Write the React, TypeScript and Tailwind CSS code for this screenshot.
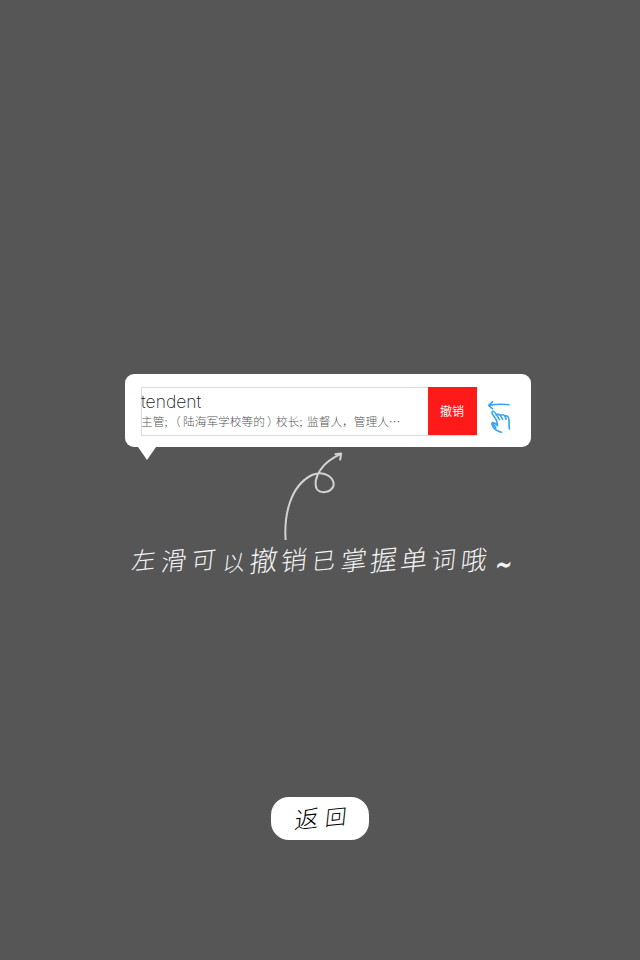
const hand = 'font-["Noto_Sans_CJK_SC",sans-serif] font-light';

// Each glyph sits in a 30px cell; its own size and drop imitate brush writing.
const caption = [
  ['左', 'text-[24px]'],
  ['滑', 'text-[25px]'],
  ['可', 'text-[24px]'],
  ['以', 'text-[22px] pt-[3px]'],
  ['撤', 'text-[28px]'],
  ['销', 'text-[26px]'],
  ['已', 'text-[23px]'],
  ['掌', 'text-[26px]'],
  ['握', 'text-[27px]'],
  ['单', 'text-[27px]'],
  ['词', 'text-[24px]'],
  ['哦', 'text-[26px]'],
];

function SwipeHand() {
  return (
    <svg width="26" height="36" viewBox="486 399 26 36" fill="none" stroke="#35a4f5" strokeWidth="1.6" strokeLinecap="round" strokeLinejoin="round">
      <path d="M509 404.7Q499 403.4 488.8 405.4M492.6 401.8L488.6 405.4L492.6 408.8" />
      <path d="M496.6 420.5L492.2 413.6Q491.6 411.2 493.4 411.3Q494.8 411.5 499.4 419.6M496 414.8Q498.6 413.6 500.3 415.4L502.6 419.2M500.4 415.4Q503.6 413.8 505 416L506 419.3M505 416Q507.8 415.2 508.6 418.2C509.8 421.5 508.4 425 509.4 429M496.6 420.5L497.6 425.8Q494.5 421.8 492.3 422.8Q491 424 493.5 427.5Q496 430.8 501.4 432.3M492.3 422.8L495.8 427.5" />
    </svg>
  );
}

function CurlArrow() {
  return (
    <svg className="ml-[280px]" width="66" height="93" viewBox="280 447 66 93" fill="none" stroke="#d2d2d2" strokeWidth="2" strokeLinejoin="round">
      <path d="M285.6 540C284 515 290 486 312 475C326 469 336 480 333.2 486.5C330 493.6 320 493.5 316.8 489C314.2 484 316.2 476 319.8 470.7Q326 460.8 340.5 454.2" />
      <path d="M334.6 454.3L341.2 453.6L340 460.4" />
    </svg>
  );
}

export default function App() {
  return (
    <main className="flex h-[960px] w-[640px] flex-col overflow-hidden bg-[#565656] pt-[374px]">
      <section className="relative ml-[125px] flex h-[73px] w-[406px] shrink-0 items-start rounded-[9px] bg-white pl-4 pt-[13px]">
        <div className="flex h-[49px] w-[336px] border border-[#dcdcdc]">
          <div className="flex w-[286px] shrink-0 flex-col whitespace-nowrap">
            <h1 className='mt-[3px] -ml-px h-[21px] font-["Inter",sans-serif] text-[17.5px] font-extralight leading-[21px] text-[#222]'>tendent</h1>
            <p className='-ml-px flex h-[18px] font-["Noto_Sans_CJK_SC",sans-serif] text-[11.7px] font-light leading-[18px] text-[#555]'>
              <span className="w-[30px]">主管;</span>
              <span className="-ml-[2px] mr-[2px] w-[12px]">（</span>
              <span className="w-[82px]">陆海军学校等的</span>
              <span className="ml-[2px] w-[9px] tracking-[-3px]">）</span>
              <span className="w-[31px]">校长;</span>
              <span>监督人，管理人⋯</span>
            </p>
          </div>
          <button className='-mt-px -mr-px h-[48px] grow bg-[#ff1a1a] pr-px font-["Noto_Sans_CJK_SC",sans-serif] text-[12px] text-white'>撤销</button>
        </div>
        <div className="ml-[9px] mt-[12px]">
          <SwipeHand />
        </div>
        <svg className="absolute left-[13px] top-[72px]" width="18" height="14" viewBox="0 0 18 14" fill="white">
          <path d="M0 0H18V1L9 14L0 1Z" />
        </svg>
      </section>
      <CurlArrow />
      <p className={`${hand} ml-[129px] flex h-[38px] items-center leading-10 text-[#f4f4f4]`}>
        {caption.map(([glyph, size]) => (
          <span key={glyph} className={`${size} w-[30px] -skew-x-6 -skew-y-6 text-center`}>{glyph}</span>
        ))}
        <span className="ml-[7px] mt-[7px] -skew-x-12 scale-y-150 font-['DejaVu_Sans',sans-serif] text-[19px] font-normal [-webkit-text-stroke:0.6px_currentColor]">~</span>
      </p>
      <button className={`${hand} ml-[271px] mt-[219px] flex h-[43px] w-[98px] shrink-0 items-center justify-center rounded-[18px] bg-white text-black`}>
        <span className="-mt-[2px] ml-[2px] w-[30px] -skew-x-6 -skew-y-6 text-center text-[24px]">返</span>
        <span className="-mt-[4px] w-[28px] -skew-x-6 -skew-y-6 text-center text-[21px]">回</span>
      </button>
    </main>
  );
}
